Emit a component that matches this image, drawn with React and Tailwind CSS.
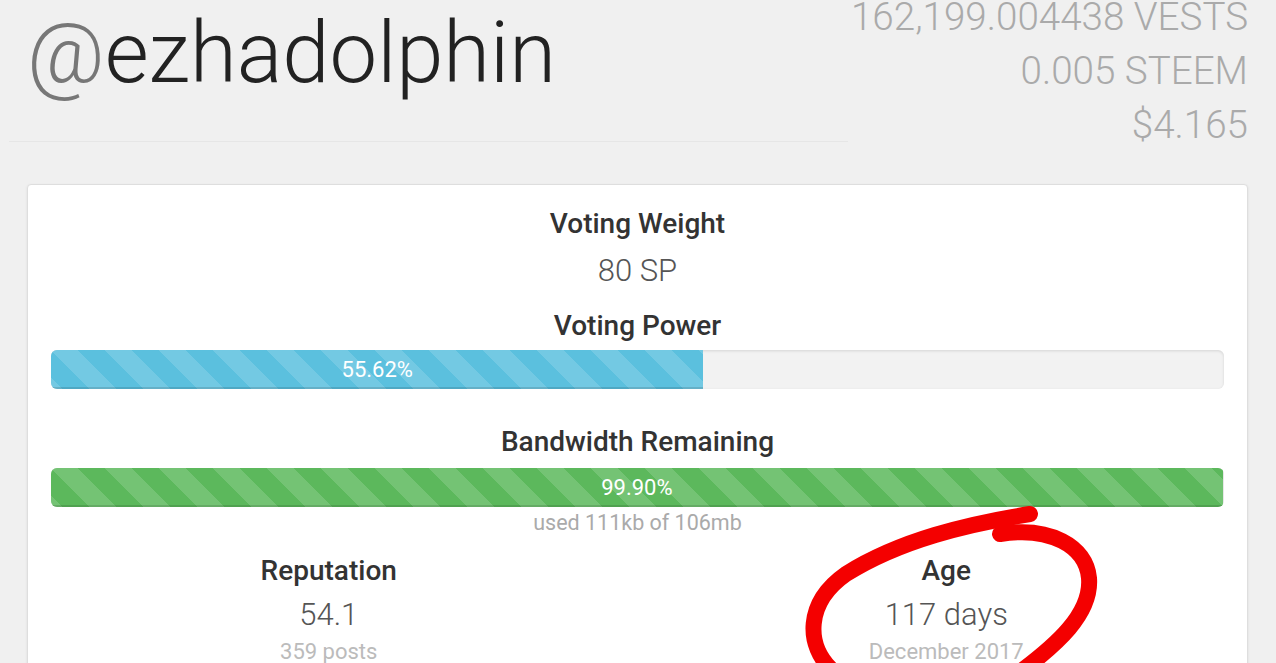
import React from "react";

const stripes =
  "bg-[linear-gradient(45deg,rgba(255,255,255,.15)_25%,transparent_25%,transparent_50%,rgba(255,255,255,.15)_50%,rgba(255,255,255,.15)_75%,transparent_75%,transparent)] bg-[length:54px_54px]";

const Bar = ({ value, color }) => (
  <div className="h-[39px] w-full rounded-[6px] bg-[#f2f2f2] shadow-[inset_0_1px_3px_rgba(0,0,0,0.12)] overflow-hidden">
    <div
      className={`h-full flex items-center justify-center text-white text-[22px] leading-none shadow-[inset_0_-2px_0_rgba(0,0,0,0.12)] ${stripes} ${color}`}
      style={{ width: `${value}%` }}
    >
      {value.toFixed(2)}%
    </div>
  </div>
);

const Stat = ({ label, value, sub }) => (
  <div className="flex flex-col items-center">
    <h4 className="text-[28px] leading-[40px] font-medium text-[#333]">{label}</h4>
    <div className="mt-[4px] text-[31px] leading-[40px] font-light text-[#555]">{value}</div>
    <div className="mt-[3px] text-[22px] leading-[28px] text-[#bbb]">{sub}</div>
  </div>
);

const App = () => {
  return (
    <div className="relative h-[663px] w-[1276px] overflow-hidden bg-[#f0f0f0] font-['Roboto','Liberation_Sans',sans-serif]">
      {/* header */}
      <div className="flex h-[142px]">
        <div className="ml-[9px] w-[839px] h-[142px] border-b border-[#e6e6e6]">
          <h1 className="pl-[18px] mt-[11px] text-[85px] leading-[85px] font-light text-[#222]">
            <span className="text-[#777]">@</span>ezhadolphin
          </h1>
        </div>
        <div className="flex-1 pr-[28px] -mt-[10px] text-right text-[38.6px] leading-[54px] font-light text-[#aaa]">
          <div>162,199.004438 VESTS</div>
          <div>0.005 STEEM</div>
          <div>$4.165</div>
        </div>
      </div>

      {/* card */}
      <div className="ml-[27px] mt-[42px] w-[1221px] h-[520px] rounded-[4px] border border-[#dedede] bg-white shadow-[0_1px_3px_rgba(0,0,0,0.08)] px-[23px] pt-[19px]">
        <div className="flex flex-col items-center">
          <h4 className="text-[28px] leading-[40px] font-medium text-[#333]">Voting Weight</h4>
          <div className="mt-[7px] text-[31px] leading-[40px] font-light text-[#555]">80 SP</div>
          <h4 className="mt-[15px] text-[28px] leading-[40px] font-medium text-[#333]">Voting Power</h4>
        </div>
        <div className="mt-[4px]">
          <Bar value={55.62} color="bg-[#5bc0de]" />
        </div>
        <div className="mt-[33px] flex flex-col items-center">
          <h4 className="text-[28px] leading-[40px] font-medium text-[#333]">Bandwidth Remaining</h4>
        </div>
        <div className="mt-[6px]">
          <Bar value={99.9} color="bg-[#5cb85c]" />
        </div>
        <div className="mt-[4px] text-center text-[21.5px] leading-[24px] text-[#aaa]">used 111kb of 106mb</div>
        <div className="-mx-[31px] mt-[16px] grid grid-cols-2">
          <Stat label="Reputation" value="54.1" sub="359 posts" />
          <Stat label="Age" value="117 days" sub="December 2017" />
        </div>
      </div>

      {/* hand-drawn red circle */}
      <svg className="absolute left-0 top-0 pointer-events-none" width="1276" height="663" viewBox="0 0 1276 663" fill="none">
        <path
          d="M834 672 C804 645 806 602 846 574 C900 540 968 524 1030 514"
          stroke="#f40000"
          strokeWidth="16"
          strokeLinecap="round"
        />
        <path
          d="M1000 534 C1050 526 1086 546 1089 578 C1092 614 1056 645 1020 672"
          stroke="#f40000"
          strokeWidth="16"
          strokeLinecap="round"
        />
      </svg>
    </div>
  );
};

export default App;
